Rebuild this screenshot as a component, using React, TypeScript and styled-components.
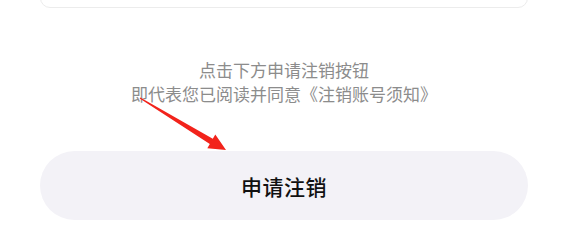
import React from 'react';
import styled, {createGlobalStyle} from 'styled-components';

const Global = createGlobalStyle`
  html, body {
    margin: 0;
    padding: 0;
    background: #fff;
    font-family: "Noto Sans CJK SC", "Noto Sans", sans-serif;
  }
`
const Page = styled.div`
  position: relative;
  width: 562px;
  height: 231px;
  overflow: hidden;
  box-sizing: border-box;
  padding: 0 34px 0 40px;
  display: flex;
  flex-direction: column;
`
const Card = styled.div`
  height: 32px;
  margin-top: -24px;
  box-sizing: border-box;
  border: 1px solid #ececec;
  border-radius: 10px;
  background: #fff;
`
const Notice = styled.div`
  margin-top: 50px;
  text-align: center;
  font-size: 17px;
  line-height: 24px;
  color: #8c8c8c;
  >p{
    margin: 0;
  }
`
const Button = styled.button`
  margin-top: 45px;
  height: 69px;
  border: none;
  border-radius: 35px;
  background: #f3f2f7;
  color: #111;
  font-family: inherit;
  font-size: 21px;
  font-weight: 500;
  letter-spacing: 0.5px;
`
const Arrow = styled.svg`
  position: absolute;
  left: 0;
  top: 0;
  pointer-events: none;
`

function App() {
  return (
    <>
      <Global/>
      <Page>
        <Card/>
        <Notice>
          <p>点击下方申请注销按钮</p>
          <p>即代表您已阅读并同意《注销账号须知》</p>
        </Notice>
        <Button>申请注销</Button>
        <Arrow width="562" height="231" viewBox="0 0 562 231">
          <polygon
            fill="#f2231b"
            points="140.3,97.4 212.8,138.8 215.3,134.5 226,150 207.3,148.3 209.8,144 139.7,98.6"
          />
        </Arrow>
      </Page>
    </>
  );
}
export default App
